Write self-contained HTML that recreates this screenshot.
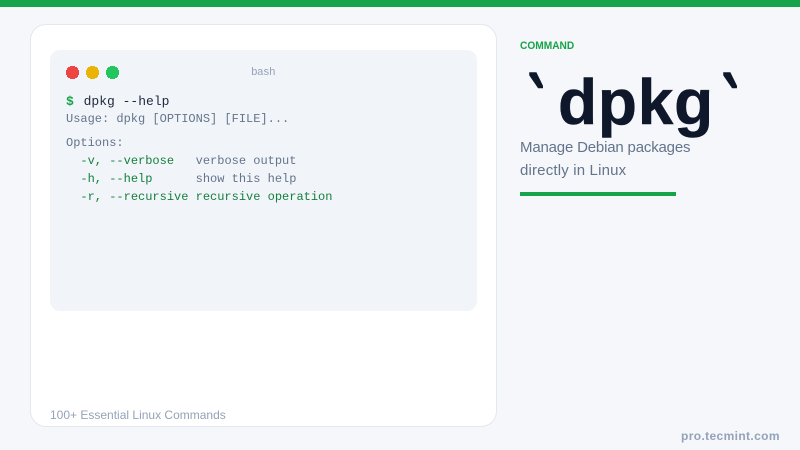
<!DOCTYPE html>
<html><head><meta charset="utf-8"><style>
html,body{margin:0;padding:0}
body{width:800px;height:450px;background:#f5f7fb;position:relative;overflow:hidden;font-family:"Liberation Sans",sans-serif}
div{position:absolute;white-space:pre}
.m{font-family:"Liberation Mono",monospace;font-size:12px;line-height:18px;color:#64748b;left:66px}
.g{color:#15803d}
.dot{top:66px;width:13px;height:13px;clip-path:polygon(4px 0,9px 0,9px 1px,11px 1px,11px 2px,12px 2px,12px 4px,13px 4px,13px 9px,12px 9px,12px 11px,11px 11px,11px 12px,9px 12px,9px 13px,4px 13px,4px 12px,2px 12px,2px 11px,1px 11px,1px 9px,0 9px,0 4px,1px 4px,1px 2px,2px 2px,2px 1px,4px 1px)}
.tick{top:53px;font-size:72px;line-height:88px;font-weight:bold;color:#0f172a;transform:scale(.72,1.3);transform-origin:0 0;-webkit-text-stroke:1.2px #0f172a}
</style></head><body>
<div style="left:0;top:0;width:800px;height:7px;background:#16a34a"></div>
<div style="left:30px;top:24px;width:465px;height:401px;background:#fff;border:1px solid #e2e8f0;border-radius:16px"></div>
<div style="left:50px;top:50px;width:427px;height:261px;background:#f1f5f9;border-radius:10px"></div>
<div class="dot" style="left:66px;background:#ef4444"></div>
<div class="dot" style="left:86px;background:#eab308"></div>
<div class="dot" style="left:106px;background:#22c55e"></div>
<div style="left:251px;top:66px;font:11px/14px 'Liberation Mono',monospace;color:#94a3b8;letter-spacing:-.6px">bash</div>
<div class="m" style="top:93px;font-size:13px;color:#1e293b"><b style="color:#16a34a">$</b> <span style="margin-left:2px">dpkg --help</span></div>
<div class="m" style="top:110px">Usage: dpkg [OPTIONS] [FILE]...</div>
<div class="m" style="top:134px">Options:</div>
<div class="m" style="top:152px">  <span class="g">-v, --verbose</span>   verbose output</div>
<div class="m" style="top:170px">  <span class="g">-h, --help</span>      show this help</div>
<div class="m" style="top:188px">  <span class="g">-r, --recursive recursive operation</span></div>
<div style="left:50px;top:408px;font-size:12px;line-height:14px;color:#94a3b8">100+ Essential Linux Commands</div>
<div style="left:520px;top:39px;font-size:11px;line-height:14px;font-weight:bold;color:#16a34a;transform:scaleX(.925);transform-origin:0 0">COMMAND</div>
<div class="tick" style="left:528px">`</div>
<div style="left:558px;top:58px;font-size:64px;line-height:88px;font-weight:bold;color:#0f172a;letter-spacing:.8px;-webkit-text-stroke:.5px #0f172a">dpkg</div>
<div class="tick" style="left:722px">`</div>
<div style="left:520px;top:136px;font-size:15px;line-height:24px;color:#64748b;letter-spacing:-.18px">Manage Debian packages</div>
<div style="left:520px;top:159px;font-size:15px;line-height:24px;color:#64748b;letter-spacing:.17px">directly in Linux</div>
<div style="left:520px;top:192px;width:156px;height:4px;background:#16a34a"></div>
<div style="left:681px;top:429px;font-size:12px;line-height:15px;font-weight:bold;color:#94a3b8;letter-spacing:.37px">pro.tecmint.com</div>
</body></html>
